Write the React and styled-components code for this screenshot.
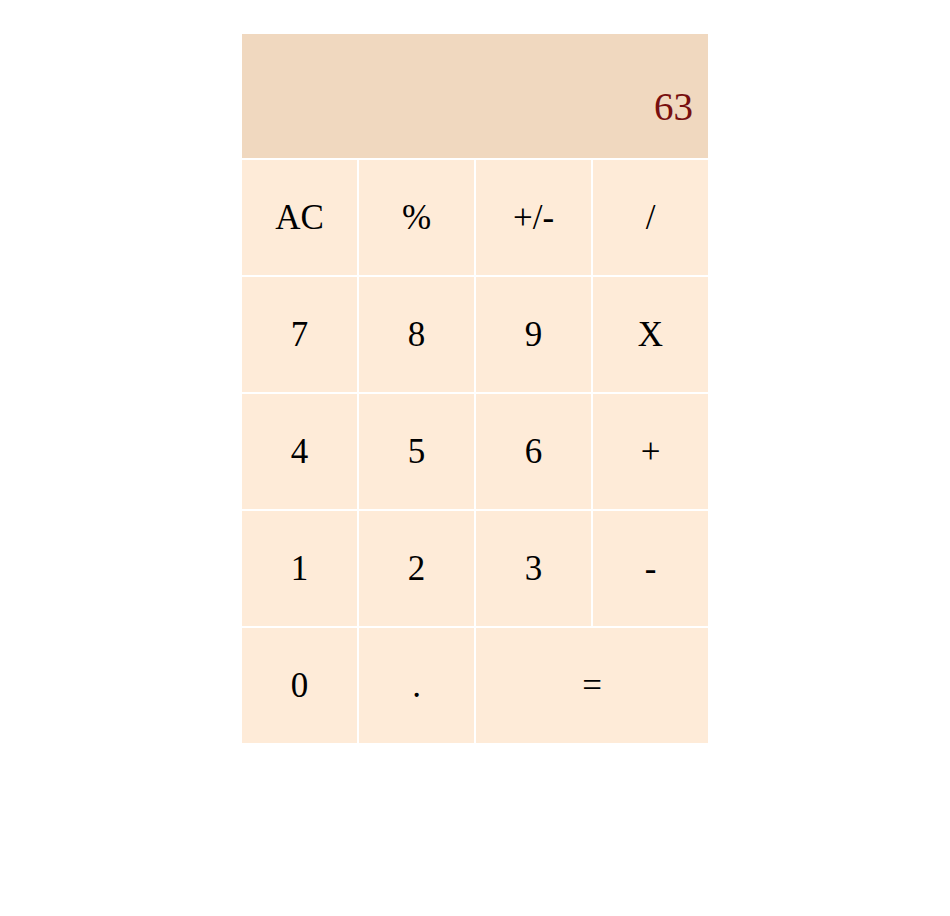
import React, { useState } from 'react'
import styled, { createGlobalStyle } from 'styled-components'

const GlobalStyle = createGlobalStyle`
  body {
    margin: 0;
    background: #ffffff;
    font-family: "Liberation Serif", "Times New Roman", serif;
  }
`

const Calculator = styled.div`
  width: 466px;
  margin: 34px auto 0;
  display: grid;
  grid-template-columns: repeat(4, 115px);
  grid-template-rows: 124px repeat(5, 115px);
  gap: 2px;
  background: #ffffff;
`

const Display = styled.div`
  grid-column: 1 / -1;
  box-sizing: border-box;
  background: #f0d8bf;
  color: #780f0f;
  font-size: 39px;
  display: flex;
  align-items: flex-end;
  justify-content: flex-end;
  padding: 0 15px 29px 0;
`

const Key = styled.button`
  grid-column: span ${(p) => p.$span || 1};
  border: none;
  margin: 0;
  padding: 0;
  background: #feebd8;
  color: #000000;
  font-family: "Liberation Serif", "Times New Roman", serif;
  font-size: 35px;
  display: flex;
  align-items: center;
  justify-content: center;
  cursor: pointer;
`

const keys = [
  ['AC'], ['%'], ['+/-'], ['/'],
  ['7'], ['8'], ['9'], ['X'],
  ['4'], ['5'], ['6'], ['+'],
  ['1'], ['2'], ['3'], ['-'],
  ['0'], ['.'], ['=', 2],
]

const App = () => {
  const [value] = useState('63')

  return (
    <>
      <GlobalStyle />
      <Calculator>
        <Display>{value}</Display>
        {keys.map(([label, span]) => (
          <Key key={label} $span={span}>{label}</Key>
        ))}
      </Calculator>
    </>
  )
}

export default App
